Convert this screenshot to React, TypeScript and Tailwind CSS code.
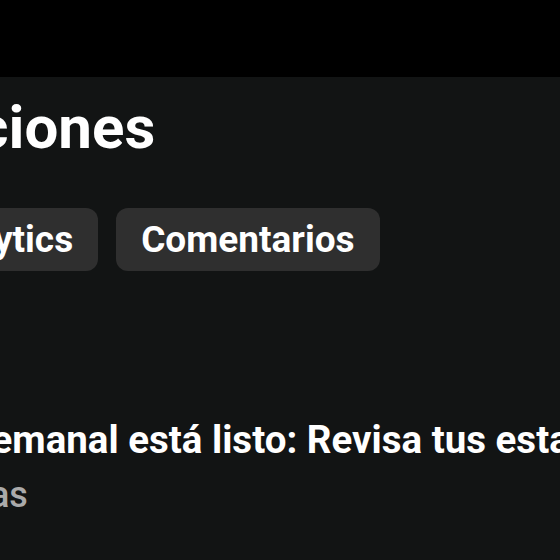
import React from 'react';

const chips = ['Todas', 'Analytics', 'Comentarios'];

const App: React.FC = () => {
  return (
    <div className="w-[560px] h-[560px] overflow-hidden bg-black flex flex-col" style={{ fontFamily: 'Roboto, "Noto Sans", sans-serif' }}>
      {/* Top bar */}
      <div className="h-[77px] flex-shrink-0 bg-black" />

      {/* Notifications panel */}
      <div className="flex-1 bg-[#121414] flex flex-col text-white whitespace-nowrap">
        <h1 className="mt-[17px] ml-[-235px] text-[60px] leading-[68px] font-bold">Notificaciones</h1>

        <div className="mt-[46px] ml-[-274px] flex gap-[18px]">
          {chips.map((chip) => (
            <button
              key={chip}
              className="h-[63px] px-[25px] rounded-[12px] bg-[#2f2f2f] text-[37px] font-bold text-white flex items-center"
            >
              {chip}
            </button>
          ))}
        </div>

        <div className="mt-[147px] ml-[-243px] flex flex-col">
          <p className="text-[38.5px] leading-[44px] font-bold text-white">
            Tu resumen semanal está listo: Revisa tus estadísticas
          </p>
          <p className="mt-[11px] ml-[59px] text-[36px] leading-[44px] font-medium text-[#aaaaaa]">Hace 2 horas</p>
        </div>
      </div>
    </div>
  );
};

export default App;
